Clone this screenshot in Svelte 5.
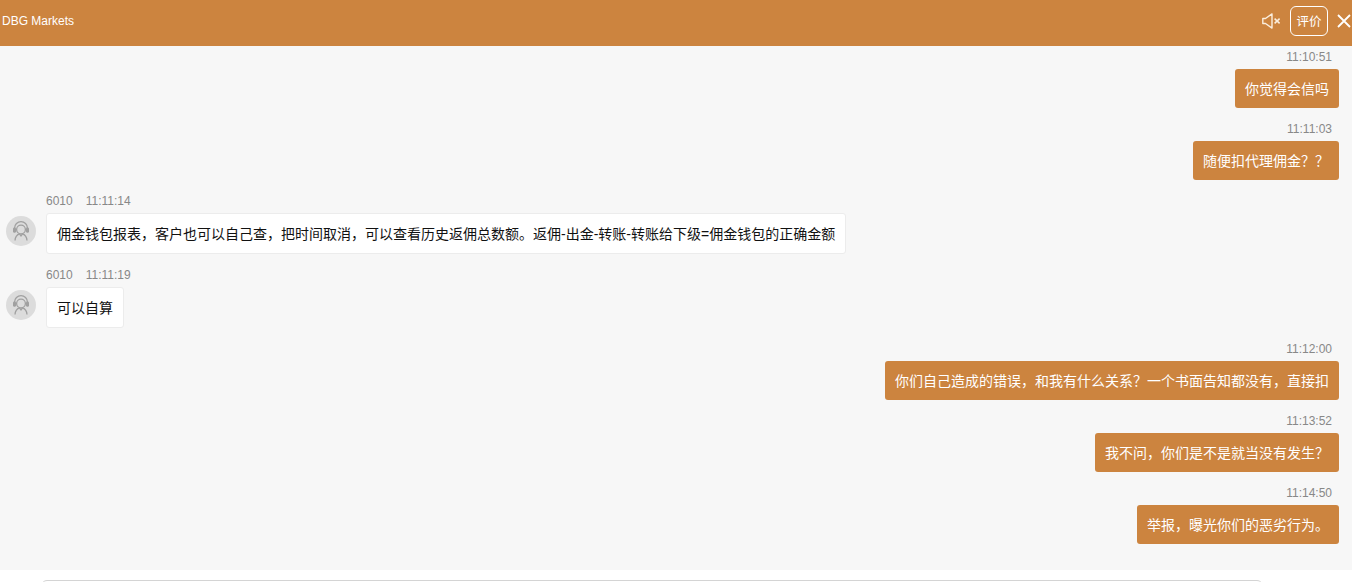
<script>
  const messages = [
    { side: 'right', time: '11:10:51', text: '你觉得会信吗' },
    { side: 'right', time: '11:11:03', text: '随便扣代理佣金？？' },
    { side: 'left', name: '6010', time: '11:11:14', text: '佣金钱包报表，客户也可以自己查，把时间取消，可以查看历史返佣总数额。返佣-出金-转账-转账给下级=佣金钱包的正确金额' },
    { side: 'left', name: '6010', time: '11:11:19', text: '可以自算' },
    { side: 'right', time: '11:12:00', text: '你们自己造成的错误，和我有什么关系？一个书面告知都没有，直接扣' },
    { side: 'right', time: '11:13:52', text: '我不问，你们是不是就当没有发生？' },
    { side: 'right', time: '11:14:50', text: '举报，曝光你们的恶劣行为。' }
  ];
</script>

<div class="page">
  <header class="bar">
    <span class="title">DBG Markets</span>
    <div class="tools">
      <svg class="mute" width="19" height="16" viewBox="0 0 19 16" fill="none" stroke="#fbeedd">
        <path d="M.8 5.5h2.7L10 .9v14.2L3.5 10.5H.8z" stroke-width="1.4" stroke-linejoin="round" />
        <path d="M12.6 5.6l5 4.8M17.6 5.6l-5 4.8" stroke-width="1.5" />
      </svg>
      <button class="rate">评价</button>
      <svg class="close" width="14" height="14" viewBox="0 0 14 14" fill="none" stroke="#fff" stroke-width="1.8">
        <path d="M1 1l12 12M13 1L1 13" />
      </svg>
    </div>
  </header>

  <main class="list">
    {#each messages as m}
      {#if m.side === 'right'}
        <div class="row right">
          <div class="meta">{m.time}</div>
          <div class="bubble mine">{m.text}</div>
        </div>
      {:else}
        <div class="row left">
          <div class="meta"><span class="name">{m.name}</span>{m.time}</div>
          <div class="body">
            <svg class="avatar" width="30" height="30" viewBox="0 0 30 30" fill="none">
              <circle cx="15" cy="15" r="15" fill="#dcdcdc" />
              <g stroke="#a0a0a0" stroke-width="1.3">
                <circle cx="15" cy="13.5" r="4.4" />
                <path d="M8.6 14v-2a6.4 6.4 0 0 1 12.8 0v2" />
                <rect x="7" y="11.4" width="3" height="5.4" rx="1.4" fill="#a0a0a0" stroke="none" />
                <rect x="20" y="11.4" width="3" height="5.4" rx="1.4" fill="#a0a0a0" stroke="none" />
                <path d="M9 24.5c.2-3.4 1.8-5.6 4.4-6.6L15 20l1.6-2.1c2.6 1 4.2 3.2 4.4 6.6" />
              </g>
            </svg>
            <div class="bubble theirs">{m.text}</div>
          </div>
        </div>
      {/if}
    {/each}
  </main>

  <footer class="foot">
    <div class="input"></div>
  </footer>
</div>

<style>
  :global(body) {
    margin: 0;
    background: #fff;
  }
  .page {
    width: 1352px;
    height: 582px;
    overflow: hidden;
    display: flex;
    flex-direction: column;
    font-family: "Liberation Sans", "Noto Sans CJK SC", sans-serif;
  }
  .bar {
    flex: none;
    height: 46px;
    box-sizing: border-box;
    padding: 0 0 4px 2px;
    background: #cc843f;
    color: #fff;
    display: flex;
    align-items: center;
    justify-content: space-between;
  }
  .title {
    font-size: 12px;
  }
  .tools {
    display: flex;
    align-items: center;
  }
  .mute {
    margin-right: 9px;
  }
  .rate {
    width: 38px;
    height: 30px;
    padding: 0 0 2px;
    margin-right: 9px;
    box-sizing: border-box;
    border: 1px solid #fff;
    border-radius: 6px;
    background: transparent;
    color: #fff;
    font: 12.5px "Liberation Sans", "Noto Sans CJK SC", sans-serif;
  }
  .close {
    margin-right: 1px;
  }
  .list {
    flex: none;
    height: 524px;
    box-sizing: border-box;
    padding-top: 2px;
    background: #f7f7f7;
    display: flex;
    flex-direction: column;
  }
  .row {
    display: flex;
    flex-direction: column;
    margin-bottom: 12px;
  }
  .row.right {
    align-items: flex-end;
    padding-right: 13px;
  }
  .row.left {
    align-items: flex-start;
    padding-left: 6px;
  }
  .meta {
    height: 18px;
    line-height: 18px;
    margin-bottom: 3px;
    font-size: 12px;
    color: #888;
  }
  .row.right .meta {
    padding-right: 7px;
  }
  .row.left .meta {
    padding-left: 40px;
  }
  .name {
    margin-right: 13px;
  }
  .body {
    display: flex;
    align-items: flex-start;
    gap: 10px;
  }
  .avatar {
    margin-top: 3px;
    flex: none;
  }
  .bubble {
    box-sizing: border-box;
    padding: 0 10px;
    font-size: 14px;
    white-space: nowrap;
  }
  .mine {
    height: 39px;
    line-height: 40px;
    background: #cc843f;
    color: #fff;
    border-radius: 3px;
  }
  .theirs {
    height: 41px;
    line-height: 40px;
    background: #fff;
    color: #111;
    border: 1px solid #ececec;
    border-radius: 3px;
  }
  .foot {
    flex: 1;
    background: #fff;
    padding: 10px 89px 0 41px;
  }
  .input {
    height: 20px;
    box-sizing: border-box;
    border: 1px solid #d4d4d4;
    border-radius: 6px;
  }
</style>
